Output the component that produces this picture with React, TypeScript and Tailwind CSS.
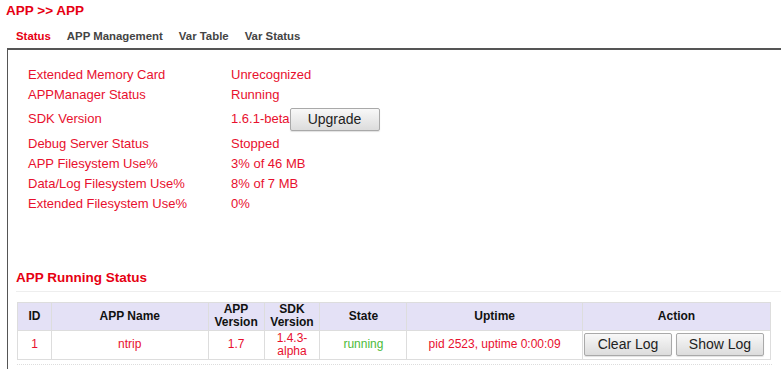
const RED = 'text-[#e8102e]';

const info: [string, string][] = [
  ['Extended Memory Card', 'Unrecognized'],
  ['APPManager Status', 'Running'],
  ['SDK Version', '1.6.1-beta'],
  ['Debug Server Status', 'Stopped'],
  ['APP Filesystem Use%', '3% of 46 MB'],
  ['Data/Log Filesystem Use%', '8% of 7 MB'],
  ['Extended Filesystem Use%', '0%'],
];

function Btn({ label, className }: { label: string; className: string }) {
  return (
    <button
      className={`rounded-[2px] border border-[#a9a9a9] bg-gradient-to-b from-[#f8f8f8] to-[#dcdcdc] text-[14px] text-[#222] shadow-[0_1px_1px_rgba(0,0,0,0.12)] ${className}`}
    >
      {label}
    </button>
  );
}

export default function App() {
  return (
    <div className="h-[369px] w-[781px] overflow-hidden bg-white font-['Liberation_Sans',Arial,sans-serif]">
      <h1 className="pl-[6px] pt-[2px] text-[13.5px] font-bold leading-[17px] text-[#e60012]">APP &gt;&gt; APP</h1>

      <div className="mt-[10px] flex gap-[16px] pl-[16px] text-[11.4px] font-bold leading-[14px] text-[#444]">
        <span className="text-[#e60012]">Status</span>
        <span>APP Management</span>
        <span>Var Table</span>
        <span>Var Status</span>
      </div>

      <div className="ml-[7px] mt-[5px] h-[400px] border-l border-t-2 border-[#555] pl-[9px] pt-[15px]">
        <div className={`pl-[11px] text-[13px] leading-[20.3px] ${RED}`}>
          {info.map(([k, v]) =>
            k === 'SDK Version' ? (
              <div key={k} className="flex h-[28px] items-center">
                <div className="w-[203px]">{k}</div>
                <div>{v}</div>
                <Btn label="Upgrade" className="h-[23px] w-[90px]" />
              </div>
            ) : (
              <div key={k} className="flex">
                <div className="w-[203px]">{k}</div>
                <div>{v}</div>
              </div>
            )
          )}
        </div>

        <h2 className="-ml-[1px] mt-[55px] border-b border-[#eee] pb-[5px] text-[13.5px] font-bold leading-[16px] text-[#e60012]">
          APP Running Status
        </h2>

        <div className="mt-[10px] w-[755px] border-b border-dotted border-[#ddd] pb-[4px]">
          <table className="w-[754px] border-collapse text-center text-[12px] leading-[13px]">
            <thead>
              <tr className="h-[28px] bg-[#e4e1f6] font-bold text-[#111]">
                <th className="w-[34px] border border-[#ddd]">ID</th>
                <th className="w-[157px] border border-[#ddd]">APP Name</th>
                <th className="w-[56px] border border-[#ddd]">APP<br />Version</th>
                <th className="w-[56px] border border-[#ddd]">SDK<br />Version</th>
                <th className="w-[87px] border border-[#ddd]">State</th>
                <th className="w-[176px] border border-[#ddd]">Uptime</th>
                <th className="border border-[#ddd]">Action</th>
              </tr>
            </thead>
            <tbody>
              <tr className={`h-[29px] ${RED}`}>
                <td className="border border-[#ddd]">1</td>
                <td className="border border-[#ddd]">ntrip</td>
                <td className="border border-[#ddd]">1.7</td>
                <td className="border border-[#ddd]">1.4.3-<br />alpha</td>
                <td className="border border-[#ddd] text-[#4cbb3a]">running</td>
                <td className="border border-[#ddd]">pid 2523, uptime 0:00:09</td>
                <td className="border border-[#ddd] pl-[1px] pr-[6px]">
                  <div className="flex justify-start gap-[4px]">
                    <Btn label="Clear Log" className="h-[23px] w-[88px]" />
                    <Btn label="Show Log" className="h-[23px] w-[88px]" />
                  </div>
                </td>
              </tr>
            </tbody>
          </table>
        </div>
      </div>
    </div>
  );
}
